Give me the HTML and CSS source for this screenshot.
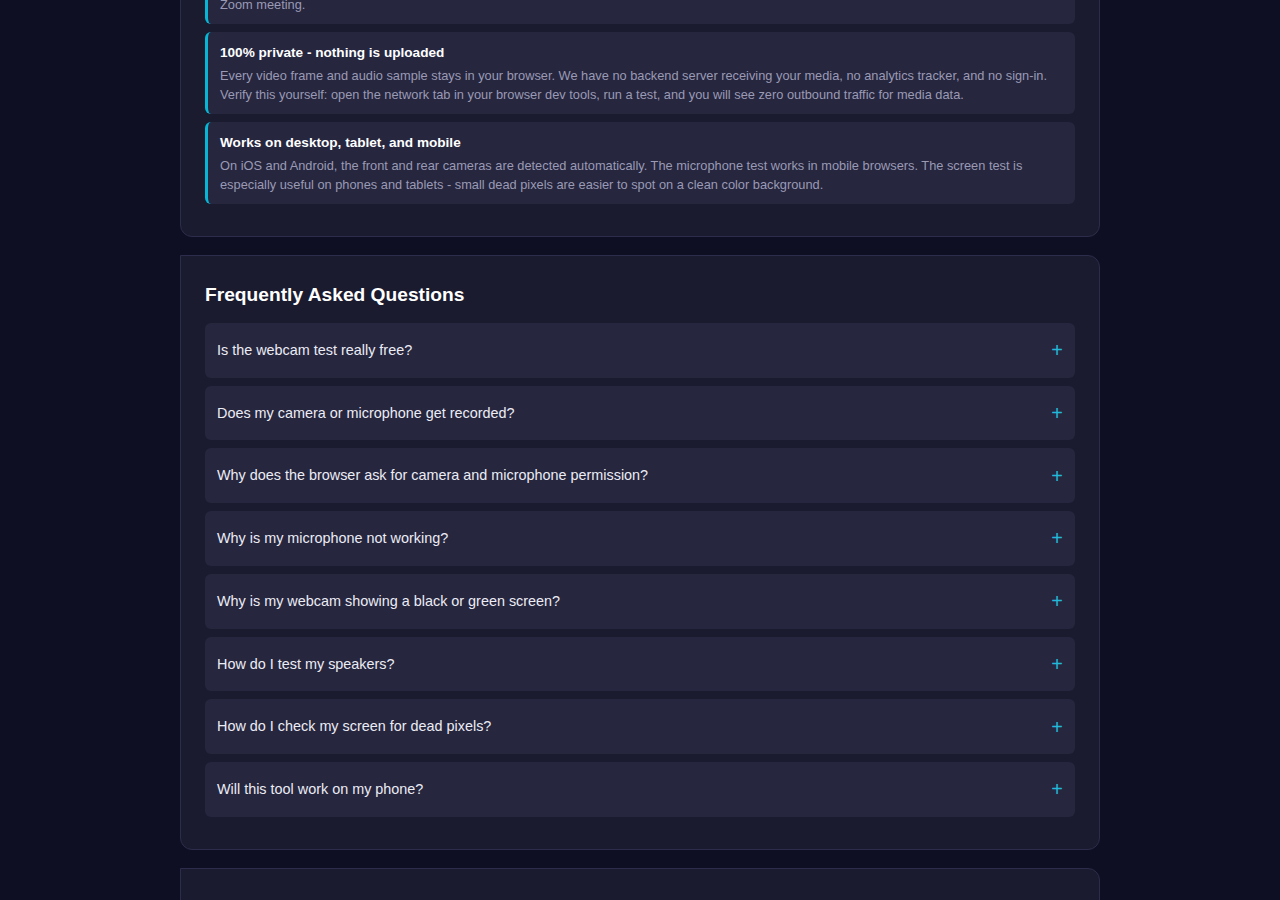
FILE: index.html
```html
<!DOCTYPE html>
<html lang="en">
<head>
    <meta charset="UTF-8">
    <meta name="viewport" content="width=device-width, initial-scale=1.0">
    <title>Webcam &amp; Microphone Test</title>
    <link rel="stylesheet" href="styles.css">
</head>
<body>
    <main class="page">
        <section class="card features">
            <div class="feature">
                <div class="feature-title">Check before every call</div>
                <p class="feature-text">Run this check before a job interview, an online class, or a call with family, so you never end up fixing your camera or microphone in a Teams or Zoom meeting.</p>
            </div>
            <div class="feature">
                <div class="feature-title">100% private - nothing is uploaded</div>
                <p class="feature-text">Every video frame and audio sample stays in your browser. We have no backend server receiving your media, no analytics tracker, and no sign-in. Verify this yourself: open the network tab in your browser dev tools, run a test, and you will see zero outbound traffic for media data.</p>
            </div>
            <div class="feature">
                <div class="feature-title">Works on desktop, tablet, and mobile</div>
                <p class="feature-text">On iOS and Android, the front and rear cameras are detected automatically. The microphone test works in mobile browsers. The screen test is especially useful on phones and tablets - small dead pixels are easier to spot on a clean color background.</p>
            </div>
        </section>

        <section class="card faq">
            <h2>Frequently Asked Questions</h2>
            <div class="faq-item"><span>Is the webcam test really free?</span><span class="faq-toggle">+</span></div>
            <div class="faq-item"><span>Does my camera or microphone get recorded?</span><span class="faq-toggle">+</span></div>
            <div class="faq-item"><span>Why does the browser ask for camera and microphone permission?</span><span class="faq-toggle">+</span></div>
            <div class="faq-item"><span>Why is my microphone not working?</span><span class="faq-toggle">+</span></div>
            <div class="faq-item"><span>Why is my webcam showing a black or green screen?</span><span class="faq-toggle">+</span></div>
            <div class="faq-item"><span>How do I test my speakers?</span><span class="faq-toggle">+</span></div>
            <div class="faq-item"><span>How do I check my screen for dead pixels?</span><span class="faq-toggle">+</span></div>
            <div class="faq-item"><span>Will this tool work on my phone?</span><span class="faq-toggle">+</span></div>
        </section>

        <section class="card related"></section>
    </main>
</body>
</html>
```

FILE: styles.css
```css
body {
    font-family: "Liberation Sans", Arial, sans-serif;
    background-color: #0f0f24;
    color: #e6e6f0;
    margin: 0;
    padding: 0;
}

/* page is shown scrolled down to the FAQ */
.page {
    width: 920px;
    margin: -83px auto 0;
}

.card {
    background-color: #1b1b2f;
    border: 1px solid #2c2c4c;
    border-radius: 0 12px 12px 12px;
    padding: 24px;
    margin-bottom: 18px;
}

.feature {
    background-color: #26263f;
    border-left: 3px solid #06b6d4;
    border-radius: 6px;
    padding: 12px 14px 10px 12px;
    margin-bottom: 8px;
}

.feature-title {
    font-size: 13.6px;
    font-weight: bold;
    line-height: 18px;
    color: #ffffff;
    margin-bottom: 4px;
}

.feature-text {
    font-size: 12.8px;
    line-height: 19px;
    color: #9a9ab4;
    margin: 0;
}

h2 {
    font-size: 19.2px;
    line-height: 30px;
    color: #ffffff;
    margin: 0 0 13px;
}

.faq-item {
    display: flex;
    justify-content: space-between;
    align-items: center;
    background-color: #26263f;
    border-radius: 6px;
    padding: 16px 12px;
    margin-bottom: 8px;
    font-size: 14.4px;
    line-height: 22.7px;
    color: #ececf4;
    cursor: pointer;
}

.faq-toggle {
    color: #22b8d8;
    font-size: 20px;
    line-height: 22px;
}

.related {
    height: 200px;
}
```
